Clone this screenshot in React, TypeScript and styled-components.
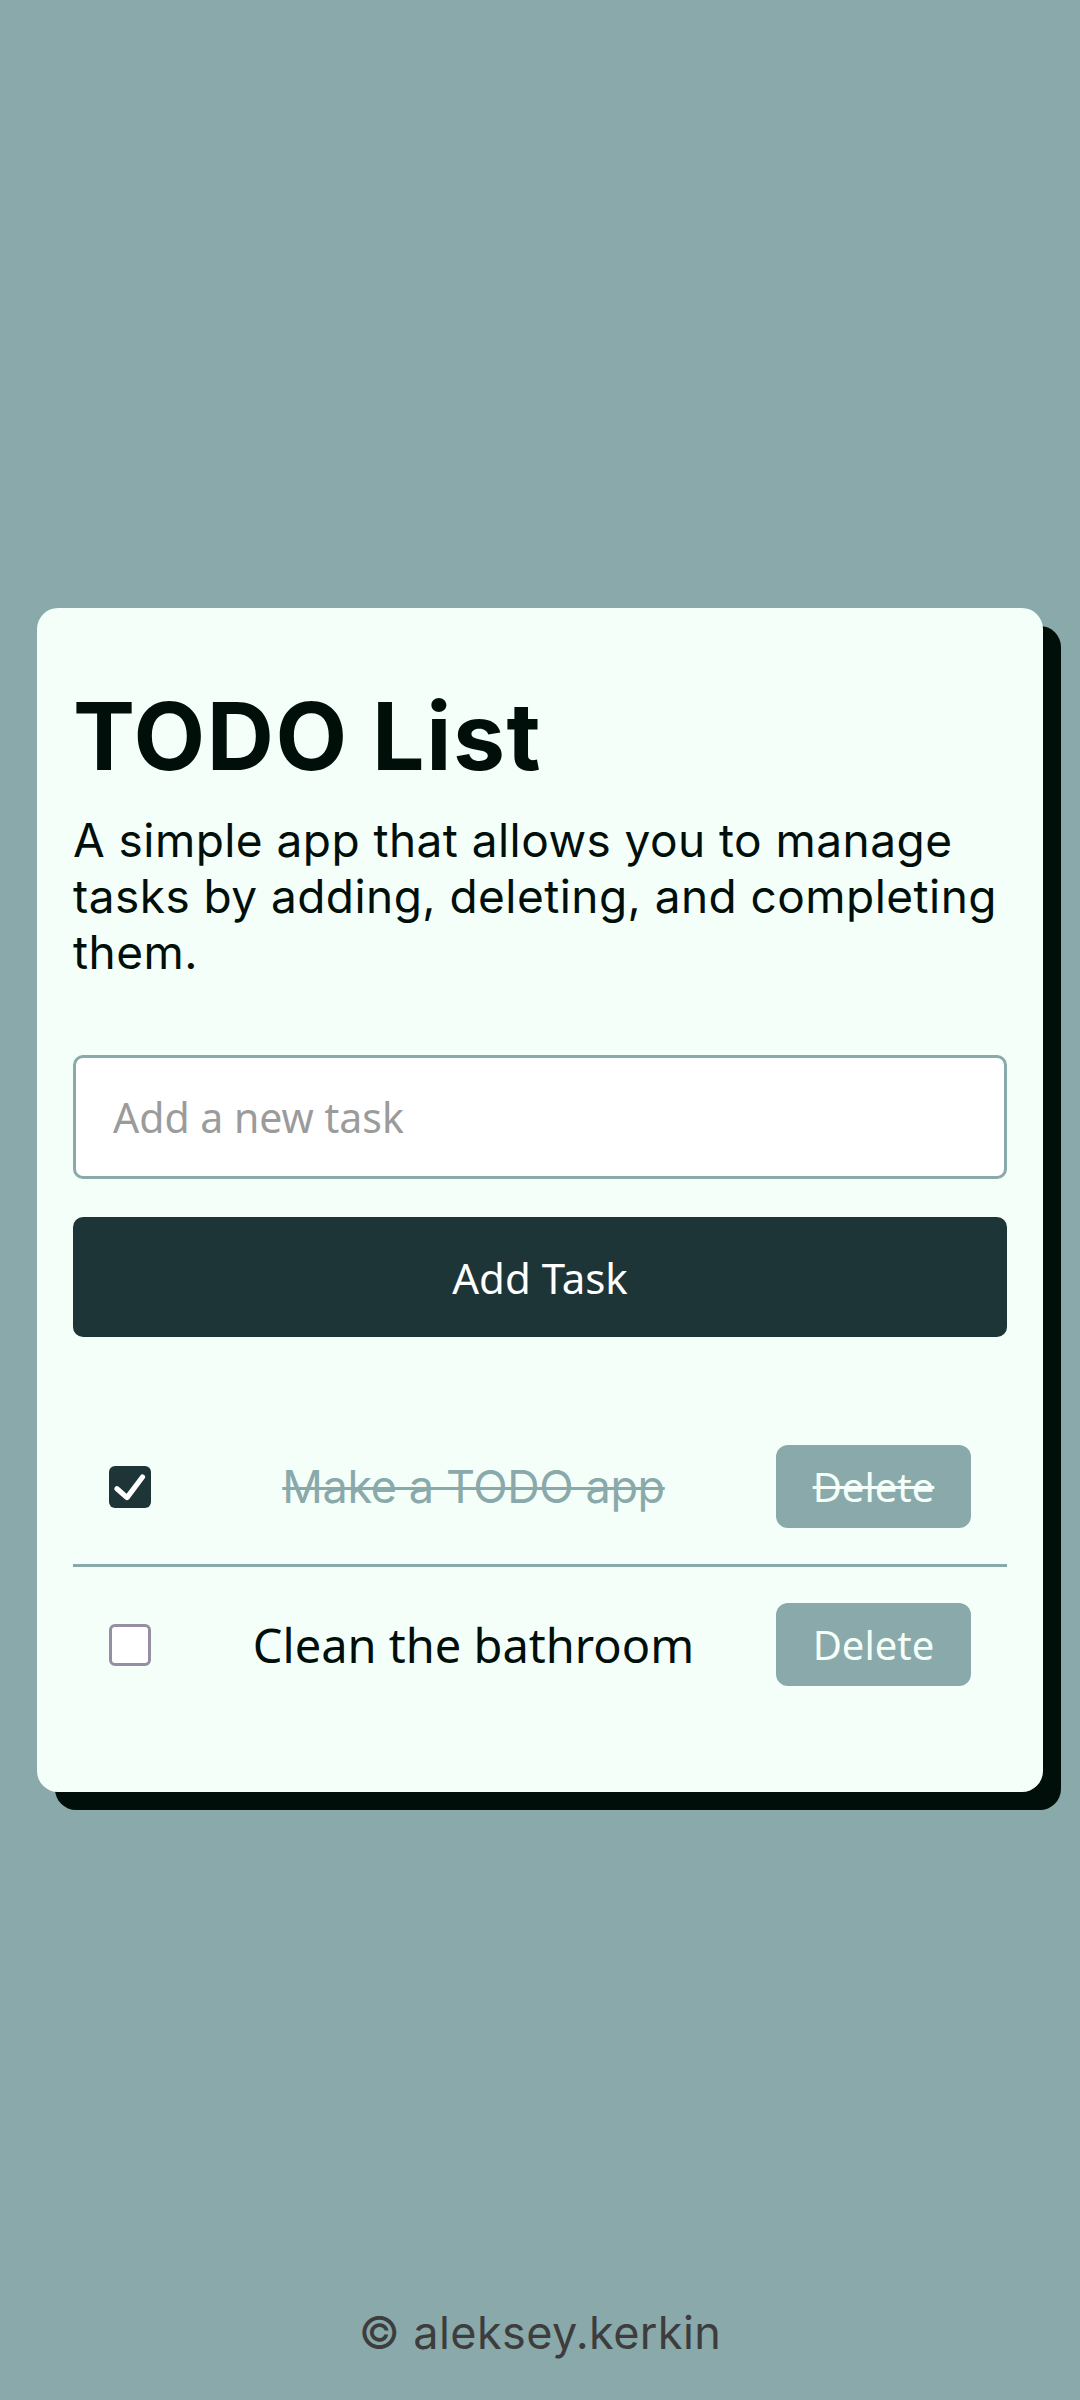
import React, { useState } from "react";
import styled, { createGlobalStyle } from "styled-components";

const GlobalStyle = createGlobalStyle`
  * { box-sizing: border-box; }
  html, body { margin: 0; padding: 0; }
  body {
    background: #8aa9aa;
    font-family: Inter, "Noto Sans", sans-serif;
    color: #010f0a;
  }
`;

const Page = styled.div`
  height: 100vh;
  display: grid;
  grid-template-rows: 1fr auto 1fr;
  justify-items: center;
`;

const Card = styled.main`
  grid-row: 2;
  width: 1006px;
  background: #f4fff9;
  border-radius: 21px;
  box-shadow: 18px 18px 0 0 #010f0a;
  padding: 82px 36px 70px;
  display: flex;
  flex-direction: column;
`;

const Title = styled.h1`
  margin: 0 0 30px;
  font-family: Inter, sans-serif;
  font-weight: 700;
  font-size: 93px;
  line-height: 92px;
  letter-spacing: 1.5px;
  color: #010f0a;
`;

const Description = styled.p`
  margin: 0 0 75px;
  font-family: Inter, sans-serif;
  font-size: 46px;
  line-height: 56.2px;
  letter-spacing: 0.45px;
  color: #010f0a;
`;

const TaskInput = styled.input`
  height: 124px;
  width: 100%;
  border: 3px solid #8aa9aa;
  border-radius: 10px;
  background: #ffffff;
  padding: 0 37px;
  font-family: "Noto Sans", "Open Sans", sans-serif;
  font-size: 41px;
  color: #010f0a;
  outline: none;
  &::placeholder { color: #9b9b9b; }
`;

const AddButton = styled.button`
  margin-top: 38px;
  height: 120px;
  width: 100%;
  border: none;
  border-radius: 10px;
  background: #1e3537;
  color: #ffffff;
  font-family: "Noto Sans", "Open Sans", sans-serif;
  font-size: 42px;
  cursor: pointer;
`;

const List = styled.ul`
  list-style: none;
  margin: 72px 0 0;
  padding: 0;
`;

const Item = styled.li<{ $last?: boolean }>`
  display: flex;
  align-items: center;
  gap: 24px;
  padding: 36px;
  border-bottom: ${(p) => (p.$last ? "none" : "3px solid #8aa9aa")};
`;

const Check = styled.span<{ $checked: boolean }>`
  flex: none;
  width: 42px;
  height: 42px;
  border-radius: 6px;
  display: flex;
  align-items: center;
  justify-content: center;
  background: ${(p) => (p.$checked ? "#1e3537" : "#ffffff")};
  border: ${(p) => (p.$checked ? "none" : "3px solid #958fa1")};
  cursor: pointer;
`;

const TaskText = styled.span<{ $done: boolean }>`
  flex: 1;
  text-align: center;
  padding-left: 20px;
  font-family: ${(p) =>
    p.$done ? "Inter, sans-serif" : "\"Noto Sans\", \"Open Sans\", sans-serif"};
  font-size: ${(p) => (p.$done ? "45px" : "47px")};
  letter-spacing: ${(p) => (p.$done ? "-0.4px" : "0")};
  color: ${(p) => (p.$done ? "#8aa9aa" : "#010f0a")};
  text-decoration: ${(p) => (p.$done ? "line-through" : "none")};
  text-decoration-thickness: 3px;
`;

const DeleteButton = styled.button<{ $done: boolean }>`
  flex: none;
  height: 83px;
  width: 195px;
  padding: 0;
  border: none;
  border-radius: 12px;
  background: #8aa9aa;
  color: #f4fff9;
  font-family: "Noto Sans", "Open Sans", sans-serif;
  font-size: 40px;
  text-decoration: ${(p) => (p.$done ? "line-through" : "none")};
  text-decoration-thickness: 3px;
  cursor: pointer;
`;

const Footer = styled.footer`
  grid-row: 3;
  align-self: end;
  padding-bottom: 40px;
  font-family: Inter, sans-serif;
  font-size: 45px;
  letter-spacing: 0.4px;
  color: #3d3d3d;
`;

type Task = { id: number; text: string; done: boolean };

export default function App() {
  const [tasks, setTasks] = useState<Task[]>([
    { id: 1, text: "Make a TODO app", done: true },
    { id: 2, text: "Clean the bathroom", done: false },
  ]);
  const [value, setValue] = useState("");

  const add = () => {
    if (!value.trim()) return;
    setTasks([...tasks, { id: Date.now(), text: value.trim(), done: false }]);
    setValue("");
  };

  return (
    <>
      <GlobalStyle />
      <Page>
        <Card>
          <Title>TODO List</Title>
          <Description>
            A simple app that allows you to manage tasks by adding, deleting, and completing them.
          </Description>
          <TaskInput
            placeholder="Add a new task"
            value={value}
            onChange={(e) => setValue(e.target.value)}
          />
          <AddButton onClick={add}>Add Task</AddButton>
          <List>
            {tasks.map((t, i) => (
              <Item key={t.id} $last={i === tasks.length - 1}>
                <Check
                  $checked={t.done}
                  onClick={() =>
                    setTasks(tasks.map((x) => (x.id === t.id ? { ...x, done: !x.done } : x)))
                  }
                >
                  {t.done && (
                    <svg width="42" height="42" viewBox="0 0 42 42">
                      <polyline
                        points="8,22.8 18,31.6 33.5,11"
                        fill="none"
                        stroke="#ffffff"
                        strokeWidth="5.2"
                        strokeLinecap="round"
                        strokeLinejoin="round"
                      />
                    </svg>
                  )}
                </Check>
                <TaskText $done={t.done}>{t.text}</TaskText>
                <DeleteButton
                  $done={t.done}
                  onClick={() => setTasks(tasks.filter((x) => x.id !== t.id))}
                >
                  Delete
                </DeleteButton>
              </Item>
            ))}
          </List>
        </Card>
        <Footer>© aleksey.kerkin</Footer>
      </Page>
    </>
  );
}
